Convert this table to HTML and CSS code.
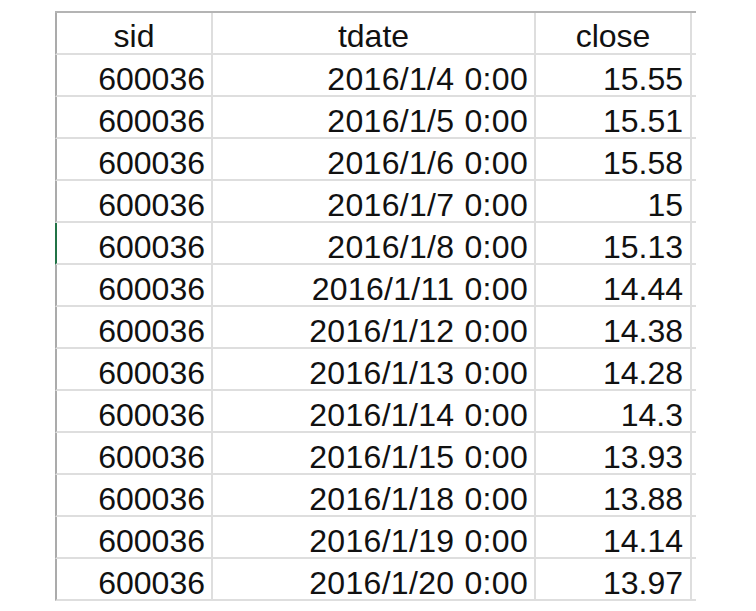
FILE: index.html
```html
<!DOCTYPE html>
<html>
<head>
<meta charset="utf-8">
<link rel="stylesheet" href="styles.css">
</head>
<body>
<div class="sheet">
  <div class="row head"><div class="cell c1">sid</div><div class="cell c2">tdate</div><div class="cell c3">close</div><div class="cell c4"></div></div>
  <div class="row"><div class="cell c1">600036</div><div class="cell c2">2016/1/4 0:00</div><div class="cell c3">15.55</div><div class="cell c4"></div></div>
  <div class="row"><div class="cell c1">600036</div><div class="cell c2">2016/1/5 0:00</div><div class="cell c3">15.51</div><div class="cell c4"></div></div>
  <div class="row"><div class="cell c1">600036</div><div class="cell c2">2016/1/6 0:00</div><div class="cell c3">15.58</div><div class="cell c4"></div></div>
  <div class="row"><div class="cell c1">600036</div><div class="cell c2">2016/1/7 0:00</div><div class="cell c3">15</div><div class="cell c4"></div></div>
  <div class="row active"><div class="cell c1">600036</div><div class="cell c2">2016/1/8 0:00</div><div class="cell c3">15.13</div><div class="cell c4"></div></div>
  <div class="row"><div class="cell c1">600036</div><div class="cell c2">2016/1/11 0:00</div><div class="cell c3">14.44</div><div class="cell c4"></div></div>
  <div class="row"><div class="cell c1">600036</div><div class="cell c2">2016/1/12 0:00</div><div class="cell c3">14.38</div><div class="cell c4"></div></div>
  <div class="row"><div class="cell c1">600036</div><div class="cell c2">2016/1/13 0:00</div><div class="cell c3">14.28</div><div class="cell c4"></div></div>
  <div class="row"><div class="cell c1">600036</div><div class="cell c2">2016/1/14 0:00</div><div class="cell c3">14.3</div><div class="cell c4"></div></div>
  <div class="row"><div class="cell c1">600036</div><div class="cell c2">2016/1/15 0:00</div><div class="cell c3">13.93</div><div class="cell c4"></div></div>
  <div class="row"><div class="cell c1">600036</div><div class="cell c2">2016/1/18 0:00</div><div class="cell c3">13.88</div><div class="cell c4"></div></div>
  <div class="row"><div class="cell c1">600036</div><div class="cell c2">2016/1/19 0:00</div><div class="cell c3">14.14</div><div class="cell c4"></div></div>
  <div class="row"><div class="cell c1">600036</div><div class="cell c2">2016/1/20 0:00</div><div class="cell c3">13.97</div><div class="cell c4"></div></div>
</div>
</body>
</html>
```

FILE: styles.css
```css
html, body {
  margin: 0;
  padding: 0;
  background: #ffffff;
}

body {
  font-family: "Liberation Sans", Arial, sans-serif;
  font-size: 32px;
  color: #111111;
}

.sheet {
  margin: 11px 0 0 55px;
  width: 641px;
  border-top: 2px solid #b4b4b4;
}

.row {
  display: grid;
  grid-template-columns: 158px 323px 156px 4px;
  height: 42px;
}

.cell {
  box-sizing: border-box;
  height: 42px;
  padding: 8px 6px 0 0;
  line-height: 32px;
  text-align: right;
  white-space: nowrap;
  border-right: 2px solid #dedede;
  border-bottom: 2px solid #dedede;
}

.c1 {
  border-left: 2px solid #ababab;
}

.c2 {
  letter-spacing: 0.3px;
  word-spacing: 1px;
}

.c3 {
  padding-right: 7px;
}

.c4 {
  border-right: none;
  padding: 0;
}

.head .cell {
  text-align: center;
  padding: 7px 0 0 0;
  letter-spacing: 0;
  word-spacing: 0;
}

.head .c4 {
  padding: 0;
}

.active .c1 {
  border-left-color: #217346;
}
```
